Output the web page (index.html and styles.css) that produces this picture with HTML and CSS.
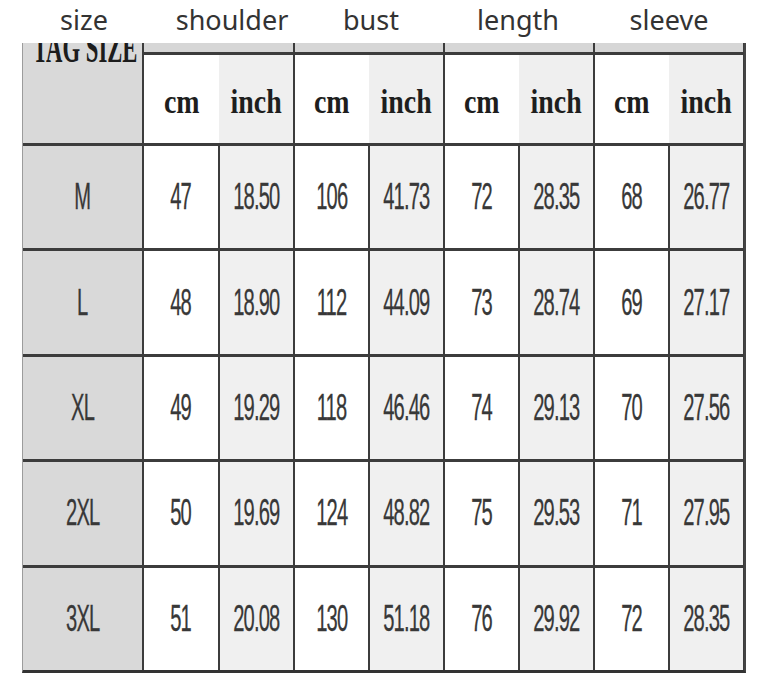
FILE: index.html
```html
<!DOCTYPE html>
<html>
<head>
<meta charset="utf-8">
<link rel="stylesheet" href="styles.css">
</head>
<body>
<div class="labels">
  <span class="label label-size">size</span>
  <span class="label label-shoulder">shoulder</span>
  <span class="label label-bust">bust</span>
  <span class="label label-length">length</span>
  <span class="label label-sleeve">sleeve</span>
</div>
<div class="chart">
  <div class="tag"><span class="tag-text">TAG SIZE</span></div>
  <div class="band"></div>
  <div class="band"></div>
  <div class="band"></div>
  <div class="band"></div>
  <div class="units"><span class="unit"><b>cm</b></span><span class="unit alt"><b>inch</b></span></div>
  <div class="units"><span class="unit"><b>cm</b></span><span class="unit alt"><b>inch</b></span></div>
  <div class="units"><span class="unit"><b>cm</b></span><span class="unit alt"><b>inch</b></span></div>
  <div class="units"><span class="unit"><b>cm</b></span><span class="unit alt"><b>inch</b></span></div>

  <div class="cell size"><span>M</span></div>
  <div class="cell"><span>47</span></div><div class="cell alt"><span>18.50</span></div>
  <div class="cell"><span>106</span></div><div class="cell alt"><span>41.73</span></div>
  <div class="cell"><span>72</span></div><div class="cell alt"><span>28.35</span></div>
  <div class="cell"><span>68</span></div><div class="cell alt"><span>26.77</span></div>

  <div class="cell size"><span>L</span></div>
  <div class="cell"><span>48</span></div><div class="cell alt"><span>18.90</span></div>
  <div class="cell"><span>112</span></div><div class="cell alt"><span>44.09</span></div>
  <div class="cell"><span>73</span></div><div class="cell alt"><span>28.74</span></div>
  <div class="cell"><span>69</span></div><div class="cell alt"><span>27.17</span></div>

  <div class="cell size"><span>XL</span></div>
  <div class="cell"><span>49</span></div><div class="cell alt"><span>19.29</span></div>
  <div class="cell"><span>118</span></div><div class="cell alt"><span>46.46</span></div>
  <div class="cell"><span>74</span></div><div class="cell alt"><span>29.13</span></div>
  <div class="cell"><span>70</span></div><div class="cell alt"><span>27.56</span></div>

  <div class="cell size"><span>2XL</span></div>
  <div class="cell"><span>50</span></div><div class="cell alt"><span>19.69</span></div>
  <div class="cell"><span>124</span></div><div class="cell alt"><span>48.82</span></div>
  <div class="cell"><span>75</span></div><div class="cell alt"><span>29.53</span></div>
  <div class="cell"><span>71</span></div><div class="cell alt"><span>27.95</span></div>

  <div class="cell size"><span>3XL</span></div>
  <div class="cell"><span>51</span></div><div class="cell alt"><span>20.08</span></div>
  <div class="cell"><span>130</span></div><div class="cell alt"><span>51.18</span></div>
  <div class="cell"><span>76</span></div><div class="cell alt"><span>29.92</span></div>
  <div class="cell"><span>72</span></div><div class="cell alt"><span>28.35</span></div>
</div>
</body>
</html>
```

FILE: styles.css
```css
html, body {
  margin: 0;
  padding: 0;
  background: #ffffff;
}

.labels {
  display: grid;
  grid-template-columns: 120px 150px 150px 150px 150px;
  padding-left: 22px;
  height: 43px;
  box-sizing: border-box;
  padding-top: 2px;
  font-family: "Noto Sans", "Open Sans", sans-serif;
  font-size: 27px;
  line-height: 36px;
  color: #333333;
}

.label {
  text-align: center;
}
.label-size { padding-left: 4px; }
.label-shoulder { padding-left: 30px; }
.label-bust { padding-left: 8px; }
.label-length { padding-left: 2px; }
.label-sleeve { padding-left: 4px; }

.chart {
  display: grid;
  margin-left: 22px;
  width: 724px;
  box-sizing: border-box;
  grid-template-columns: 119px 74px 73px 73px 73px 73px 73px 73px 73px;
  grid-template-rows: 9px 88px repeat(5, 102.4px);
  column-gap: 2px;
  row-gap: 3px;
  background: #3c3c3c;
  border-left: 1px solid #9c9c9c;
  border-right: 2px solid #444444;
  border-bottom: 3px solid #333333;
}

.tag {
  grid-row: 1 / span 2;
  grid-column: 1;
  background: #d9d9d9;
  overflow: hidden;
  display: flex;
  justify-content: center;
  align-items: flex-start;
  padding-left: 6px;
}

.tag-text {
  flex: none;
  display: block;
  font-family: "Liberation Serif", "Times New Roman", serif;
  font-weight: bold;
  font-size: 42px;
  line-height: 10px;
  height: 10px;
  color: #1c1c1c;
  white-space: nowrap;
  transform: scaleX(0.54);
}

.band {
  grid-column: span 2;
  background: #d6d6d6;
}

.units {
  grid-column: span 2;
  display: flex;
}

.unit {
  flex: 1;
  background: #ffffff;
  display: flex;
  align-items: center;
  justify-content: center;
  padding-top: 6px;
  font-family: "Liberation Serif", "Times New Roman", serif;
  font-size: 34px;
  color: #1e1e1e;
}
.unit.alt {
  background: #efefef;
}
.unit b {
  display: inline-block;
  transform: scaleX(0.82);
}

.cell {
  background: #ffffff;
  display: flex;
  align-items: center;
  justify-content: center;
  font-family: "Liberation Sans", Arial, sans-serif;
  font-size: 36px;
  color: #383838;
}
.cell.alt {
  background: #f0f0f0;
}
.cell.size {
  background: #d9d9d9;
}
.cell span {
  display: inline-block;
  letter-spacing: -1.5px;
  transform: scaleX(0.56);
  -webkit-text-stroke: 0.3px #383838;
}
```
